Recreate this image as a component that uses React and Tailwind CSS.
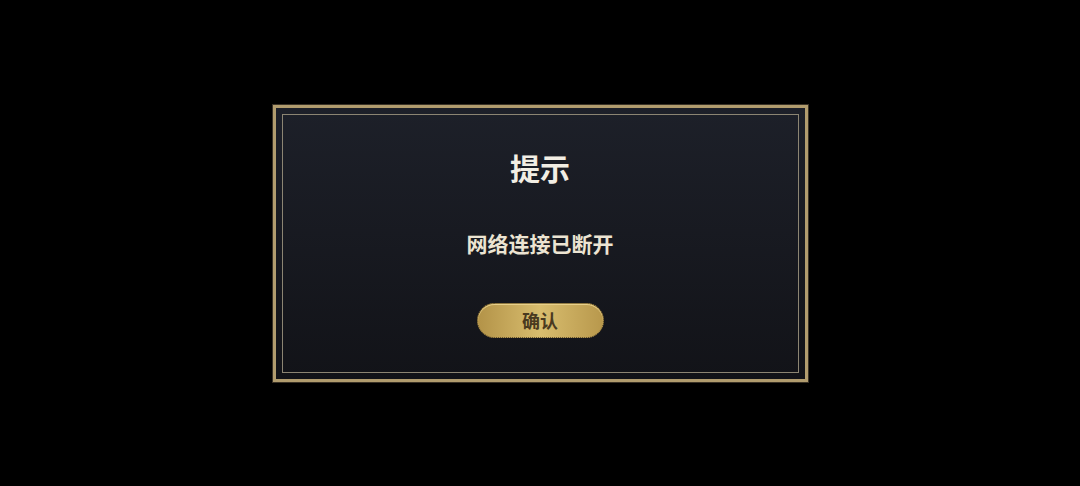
const App = () => {
  return (
    <div
      className="w-[1080px] h-[486px] bg-black flex items-center justify-center"
      style={{ fontFamily: '"Noto Sans CJK SC", "Noto Sans", sans-serif' }}
    >
      <div className="w-[535px] h-[277px] border-[3px] border-[#b19c6e] bg-gradient-to-b from-[#1d2029] to-[#121318] p-[6px] shadow-[0_0_0_1px_#3a3226]">
        <div className="h-full border border-[#8c8573] flex flex-col items-center pt-[34px]">
          <h1 className="text-[30px] leading-[36px] font-bold text-[#f2eee4]">提示</h1>
          <p className="mt-[44px] text-[21px] leading-[28px] font-bold text-[#ece4d2]">网络连接已断开</p>
          <button className="mt-[46px] w-[127px] h-[35px] rounded-full border border-dotted border-[#5c4c28] bg-gradient-to-r from-[#b39348] via-[#d8bd6e] to-[#b8984c] text-[18px] font-bold text-[#4a3a1f] flex items-center justify-center shadow-[inset_0_1px_0_#e8d08a]">
            确认
          </button>
        </div>
      </div>
    </div>
  );
};

export default App;
